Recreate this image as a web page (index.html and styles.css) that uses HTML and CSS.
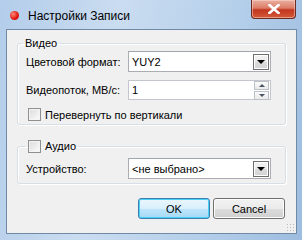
FILE: index.html
```html
<!DOCTYPE html>
<html lang="ru">
<head>
  <meta charset="UTF-8" />
  <title>Настройки Записи</title>
  <link rel="stylesheet" href="styles.css">
</head>
<body>
  <div class="window">
    <div class="titlebar">
      <span class="rec-dot"></span>
      <span class="title">Настройки Записи</span>
      <button class="close-btn">
        <svg width="12" height="10" viewBox="0 0 12 10">
          <path d="M1.5 1 L10.5 9 M10.5 1 L1.5 9" stroke="#fff" stroke-width="2.6" stroke-linecap="square"/>
        </svg>
      </button>
    </div>

    <div class="client">
      <fieldset class="group video">
        <legend>Видео</legend>
        <div class="row">
          <label>Цветовой формат:</label>
          <div class="combo">
            <span class="value">YUY2</span>
            <span class="drop"><i class="arrow"></i></span>
          </div>
        </div>
        <div class="row">
          <label>Видеопоток, MB/с:</label>
          <div class="spin">
            <span class="value">1</span>
            <span class="spin-btns">
              <span class="sbtn"><i class="up"></i></span>
              <span class="sbtn"><i class="down"></i></span>
            </span>
          </div>
        </div>
        <div class="check-row">
          <span class="check"></span>
          <span>Перевернуть по вертикали</span>
        </div>
      </fieldset>

      <fieldset class="group audio">
        <legend><span class="check"></span>Аудио</legend>
        <div class="row">
          <label>Устройство:</label>
          <div class="combo">
            <span class="value">&lt;не выбрано&gt;</span>
            <span class="drop"><i class="arrow"></i></span>
          </div>
        </div>
      </fieldset>

      <div class="buttons">
        <button class="btn default">OK</button>
        <button class="btn">Cancel</button>
      </div>
      <span class="grip"></span>
    </div>
  </div>
</body>
</html>
```

FILE: styles.css
```css
body {
  margin: 0;
  padding: 0;
  font-family: "Liberation Sans", Arial, sans-serif;
  font-size: 11px;
  color: #000;
}

.window {
  width: 302px;
  height: 240px;
  background: linear-gradient(100deg, #b3cdea 0%, #cadcf0 35%, #b4cfea 70%, #9dbcdf 100%);
  position: relative;
  overflow: hidden;
}

.titlebar {
  height: 29px;
  display: flex;
  align-items: center;
  padding-left: 10px;
  padding-top: 2px;
  box-sizing: border-box;
}

.rec-dot {
  width: 9px;
  height: 9px;
  border-radius: 50%;
  background: radial-gradient(circle at 35% 35%, #ff8a78, #e2140c 60%, #b00 100%);
  margin-right: 9px;
}

.title {
  font-size: 12px;
  color: #000;
}

.close-btn {
  position: absolute;
  top: 0;
  right: 6px;
  width: 45px;
  height: 19px;
  padding: 0;
  border: 1px solid #6b2a24;
  border-top: none;
  border-radius: 0 0 4px 4px;
  background: linear-gradient(#eab0a2 0%, #dc7c66 45%, #c2361f 55%, #d45a38 100%);
  box-shadow: inset 0 0 0 1px rgba(255, 220, 210, 0.5);
  display: flex;
  align-items: center;
  justify-content: center;
}

.client {
  margin-left: 6px;
  width: 269px;
  height: 196px;
  border: 1px solid #6f89a6;
  background: #f0f0f0;
  padding: 7px 10px 0;
  position: relative;
}

.group {
  margin: 0;
  padding: 0 0 0 8px;
  border: 1px solid #d5dfe5;
  border-radius: 3px;
  box-shadow: inset 1px 1px 0 #fff, 1px 1px 0 #fff;
}

.group legend {
  padding: 0 2px;
  margin-left: -3px;
  line-height: 13px;
  display: flex;
  align-items: center;
}

.video {
  height: 86px;
}

.row {
  display: flex;
  align-items: center;
}

.video .row {
  margin-top: 1px;
}

.video .row + .row {
  margin-top: 8px;
}

.row label {
  width: 102px;
  flex-shrink: 0;
  white-space: nowrap;
}

.combo, .spin {
  width: 143px;
  height: 21px;
  box-sizing: border-box;
  border: 1px solid #abadb3;
  border-top-color: #a0a4ab;
  background: #fff;
  display: flex;
  align-items: center;
  justify-content: space-between;
  flex-shrink: 0;
}

.spin {
  height: 20px;
  border-color: #c3c6cc;
}

.combo .value, .spin .value {
  padding-left: 3px;
}

.drop {
  width: 14px;
  height: 14px;
  margin-right: 1px;
  border: 1px solid #6e6e6e;
  background: linear-gradient(#f4f4f4, #e8e8e8 50%, #dcdcdc 50%, #d2d2d2);
  box-shadow: inset 0 0 0 1px #fff;
  display: flex;
  align-items: center;
  justify-content: center;
}

.arrow {
  border-left: 4px solid transparent;
  border-right: 4px solid transparent;
  border-top: 4px solid #000;
  margin-top: 1px;
}

.spin-btns {
  display: flex;
  flex-direction: column;
  gap: 1px;
  margin-right: 1px;
}

.sbtn {
  width: 13px;
  height: 7px;
  border: 1px solid #bcc0c9;
  background: linear-gradient(#fbfbfb, #e9e9e9);
  display: flex;
  align-items: center;
  justify-content: center;
}

.up {
  border-left: 3px solid transparent;
  border-right: 3px solid transparent;
  border-bottom: 3px solid #4b5364;
}

.down {
  border-left: 3px solid transparent;
  border-right: 3px solid transparent;
  border-top: 3px solid #4b5364;
}

.check-row {
  display: flex;
  align-items: center;
  margin-top: 8px;
  padding-left: 2px;
}

.check {
  width: 11px;
  height: 11px;
  border: 1px solid #8e8f8f;
  background: linear-gradient(135deg, #dadada, #fdfdfd);
  box-shadow: inset 0 0 0 1px #f4f4f4;
  margin-right: 4px;
  display: inline-block;
}

.audio {
  margin-top: 15px;
  height: 42px;
}

.audio legend {
  margin-left: 0;
}

.audio .row {
  margin-top: 5px;
}

.buttons {
  display: flex;
  justify-content: flex-end;
  gap: 3px;
  margin-top: 14px;
  padding-right: 1px;
}

.btn {
  width: 72px;
  height: 21px;
  font-family: "Liberation Sans", Arial, sans-serif;
  font-size: 11px;
  border: 1px solid #707070;
  border-radius: 3px;
  background: linear-gradient(#f2f2f2, #ebebeb 50%, #dddddd 50%, #cfcfcf);
  box-shadow: inset 0 0 0 1px #fcfcfc;
}

.btn.default {
  border-color: #3c7fb1;
  background: linear-gradient(#eaf6fd, #d9f0fc 50%, #bee6fd 50%, #a7d9f5);
  box-shadow: inset 0 0 0 1px #48d0f5;
}

.grip {
  position: absolute;
  right: 2px;
  bottom: 2px;
  width: 8px;
  height: 8px;
  background: radial-gradient(circle, #b9b9b9 0.8px, transparent 1px) 0 0 / 3px 3px;
}
```
